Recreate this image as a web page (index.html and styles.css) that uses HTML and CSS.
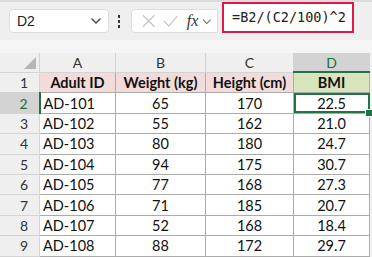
FILE: index.html
```html
<!DOCTYPE html>
<html lang="en">
<head>
    <meta charset="UTF-8">
    <title>BMI</title>
    <link rel="stylesheet" href="styles.css">
</head>
<body>
    <div class="topbar">
        <div class="namebox">
            <span>D2</span>
            <svg width="12" height="8" viewBox="0 0 12 8"><path d="M1.5 1.5 L6 6 L10.5 1.5" fill="none" stroke="#444" stroke-width="1.3"/></svg>
        </div>
        <div class="dots"><i></i><i></i><i></i></div>
        <div class="fxbox">
            <svg width="14" height="14" viewBox="0 0 14 14"><path d="M1 1 L13 13 M13 1 L1 13" stroke="#c4c4c4" stroke-width="1.2"/></svg>
            <svg width="16" height="14" viewBox="0 0 16 14"><path d="M1 7 L6 12 L15 2" fill="none" stroke="#c4c4c4" stroke-width="1.2"/></svg>
            <span class="fx">fx</span>
            <svg width="10" height="7" viewBox="0 0 10 7"><path d="M1 1.5 L5 5.5 L9 1.5" fill="none" stroke="#777" stroke-width="1.1"/></svg>
        </div>
        <div class="formula">=B2/(C2/100)^2</div>
    </div>
    <div class="gap"></div>
    <table class="sheet">
        <tr class="colhead">
            <th class="corner"><span class="tri"></span></th>
            <th>A</th><th>B</th><th>C</th><th class="sel">D</th>
        </tr>
        <tr>
            <th class="rowhead">1</th>
            <td class="head">Adult ID</td><td class="head">Weight (kg)</td><td class="head">Height (cm)</td><td class="head bmi">BMI</td>
        </tr>
        <tr>
            <th class="rowhead sel">2</th>
            <td class="left">AD-101</td><td>65</td><td>170</td><td class="active">22.5<span class="handle"></span></td>
        </tr>
        <tr><th class="rowhead">3</th><td class="left">AD-102</td><td>55</td><td>162</td><td>21.0</td></tr>
        <tr><th class="rowhead">4</th><td class="left">AD-103</td><td>80</td><td>180</td><td>24.7</td></tr>
        <tr><th class="rowhead">5</th><td class="left">AD-104</td><td>94</td><td>175</td><td>30.7</td></tr>
        <tr><th class="rowhead">6</th><td class="left">AD-105</td><td>77</td><td>168</td><td>27.3</td></tr>
        <tr><th class="rowhead">7</th><td class="left">AD-106</td><td>71</td><td>185</td><td>20.7</td></tr>
        <tr><th class="rowhead">8</th><td class="left">AD-107</td><td>52</td><td>168</td><td>18.4</td></tr>
        <tr><th class="rowhead">9</th><td class="left">AD-108</td><td>88</td><td>172</td><td>29.7</td></tr>
    </table>
</body>
</html>
```

FILE: styles.css
```css
body {
    margin: 0;
    background-color: #f3f3f3;
    font-family: Lato, "Liberation Sans", sans-serif;
    width: 372px;
    height: 257px;
    overflow: hidden;
}
.topbar {
    display: flex;
    align-items: center;
    height: 40px;
    padding: 0 0 0 9px;
    background-color: #efefef;
    border-top: 2px solid #dcdcdc;
    box-sizing: border-box;
}
.namebox {
    display: flex;
    align-items: center;
    justify-content: space-between;
    width: 100px;
    height: 24px;
    box-sizing: border-box;
    padding: 0 6px 0 7px;
    background-color: #fff;
    border: 1px solid #dedede;
    border-radius: 4px;
    font-family: "Liberation Sans", sans-serif;
    font-size: 14px;
    color: #222;
}
.dots {
    display: flex;
    flex-direction: column;
    gap: 2px;
    width: 4px;
    margin: 0 9px 0 9px;
}
.dots i {
    display: block;
    width: 2px;
    height: 3px;
    background-color: #333;
}
.fxbox {
    display: flex;
    align-items: center;
    gap: 8px;
    width: 87px;
    height: 24px;
    box-sizing: border-box;
    padding: 0 5px 0 10px;
    background-color: #fff;
    border: 1px solid #dedede;
    border-radius: 4px 0 0 4px;
}
.fx {
    font-family: "Liberation Serif", serif;
    font-style: italic;
    font-size: 16px;
    color: #333;
    margin-right: -4px;
}
.formula {
    margin-left: 4px;
    width: 132px;
    height: 31px;
    margin-top: -7px;
    box-sizing: border-box;
    border: 2px solid #e0174a;
    background-color: #fff;
    padding: 5px 0 0 8px;
    font-family: "DejaVu Sans Mono", monospace;
    font-size: 13.5px;
    color: #222;
}
.gap {
    height: 13px;
    background-color: #f5f5f5;
}
.sheet {
    border-collapse: collapse;
    table-layout: fixed;
    width: 370px;
    background-color: #fff;
    font-size: 14.5px;
    color: #111;
}
.sheet th, .sheet td {
    border: 1px solid #ababab;
    padding: 0;
    height: 19.4px;
    font-weight: normal;
    text-align: center;
}
.colhead th {
    height: 18px;
    background-color: #efefef;
    border-color: #d4d4d4;
    border-top: none;
    color: #333;
    font-size: 14px;
}
.colhead th:nth-child(2) { width: 75px; }
.colhead th:nth-child(3) { width: 89px; }
.colhead th:nth-child(4) { width: 87px; }
.colhead th:nth-child(5) { width: 75px; }
.colhead th.corner {
    width: 39px;
    position: relative;
    border-left: none;
}
.tri {
    position: absolute;
    right: 3px;
    bottom: 3px;
    width: 0;
    height: 0;
    border-left: 12px solid transparent;
    border-bottom: 12px solid #b6b6b6;
}
.colhead th.sel {
    background-color: #d3d3d3;
    color: #1e6b42;
    border-bottom: 2px solid #217346;
}
.rowhead {
    background-color: #efefef;
    border-color: #d4d4d4 !important;
    border-left: none !important;
    text-align: right !important;
    padding-right: 11px !important;
    color: #333;
    font-size: 14px;
}
.rowhead.sel {
    background-color: #d3d3d3;
    color: #1e6b42;
    border-right: 2px solid #217346 !important;
}
td.head {
    background-color: #f2dcdb;
    font-weight: bold;
}
td.bmi {
    background-color: #d8e4bc;
}
td.left {
    text-align: left;
    padding-left: 3px;
}
td.active {
    position: relative;
    outline: 2px solid #217346;
    outline-offset: -2px;
}
.handle {
    position: absolute;
    right: -4px;
    bottom: -4px;
    width: 6px;
    height: 6px;
    background-color: #217346;
    border: 1px solid #fff;
}
```
